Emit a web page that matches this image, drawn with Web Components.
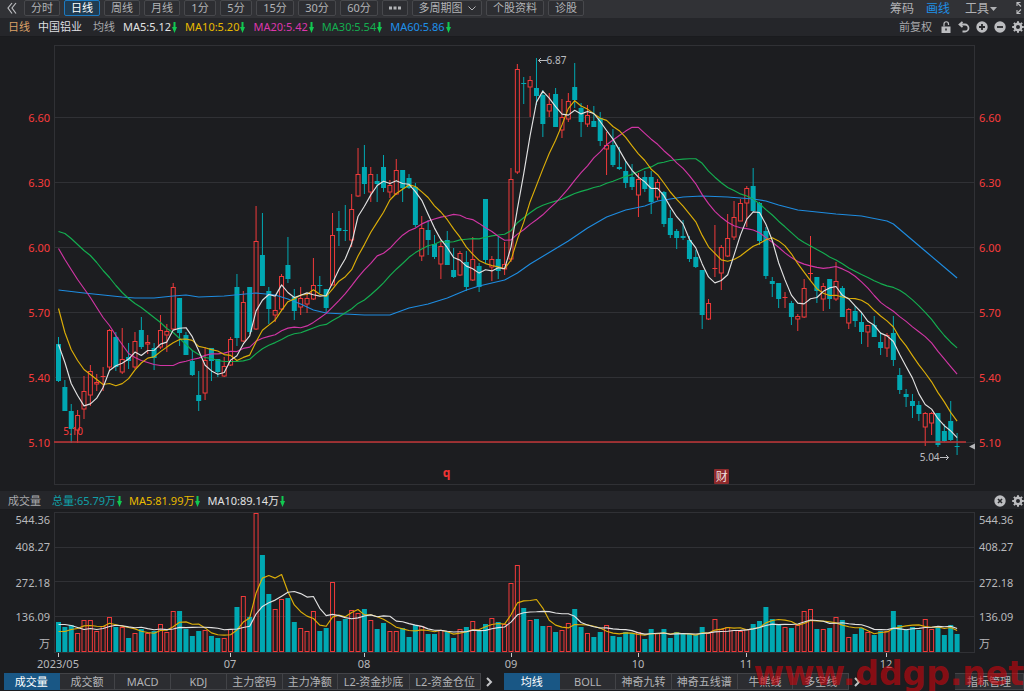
<!DOCTYPE html>
<html lang="zh-CN">
<head>
<meta charset="utf-8">
<title>中国铝业 日线</title>
<style>
html, body { margin: 0; height: 100%; background: #1c1d20; }
body { font: 11px/16px "Noto Sans", "Noto Sans CJK SC", sans-serif; color: #bcbdc0; }
</style>
</head>
<body>
<stock-app></stock-app>
<script>
// Each candle: kind (r = rising, f = falling), high, body top, body bottom, low, volume height.
const CANDLES = `f337,344,381,382,30 f380,387,411,411,25 f404,411,429,443,27 r410,415,430,443,19 r376,391,409,419,32
r365,371,395,406,32 r374,382,384,391,21 r367,376,377,391,26 r329,330,367,371,35 f332,337,367,371,25
r328,359,372,374,25 f343,357,361,369,14 r332,341,367,369,19 f317,330,347,349,23 r335,342,344,354,19
f343,348,358,370,21 r315,330,347,349,28 r324,331,335,352,20 r283,287,329,330,41 f298,298,333,346,41
f332,335,355,355,23 f350,361,375,376,16 f371,395,401,411,21 r347,360,393,400,22 f348,348,361,381,16
f359,359,372,377,14 r357,366,376,377,14 r337,339,365,366,23 f274,287,338,346,45 r291,302,341,342,56
f287,287,332,334,35 r206,241,329,330,139 f213,255,286,286,97 f287,291,309,324,58 r297,310,315,322,43
r274,276,309,310,53 f237,265,279,283,54 f289,297,311,320,30 r287,298,307,315,24 r293,298,304,313,21
r258,285,299,300,41 f276,285,286,293,21 f289,289,308,313,24 r213,235,285,285,70 f211,228,231,246,31
f205,230,231,241,33 r194,209,240,247,42 r148,174,196,197,39 f145,167,184,194,43 r167,174,192,202,32
f174,181,184,202,23 f155,167,188,192,29 r180,185,192,198,21 r159,170,194,195,21 f170,170,188,202,24
f174,178,188,189,15 f183,187,225,227,27 r216,228,256,261,26 f220,230,240,255,18 f235,244,257,259,18
r240,246,264,279,22 f231,240,265,265,20 f248,270,277,278,14 r251,253,275,276,23 f251,262,287,291,25
r237,259,280,281,31 f263,266,287,292,22 f199,199,260,264,28 r256,259,267,281,34 f237,259,271,279,30
r242,264,269,275,28 r168,179,259,262,69 r64,69,172,174,87 f77,83,84,104,44 r76,80,87,117,32
f58,88,96,105,33 f90,95,124,137,26 r93,104,111,117,26 f88,94,127,127,20 r99,117,130,138,22
r93,101,119,122,29 f63,87,100,108,43 f103,108,122,137,25 r105,115,124,127,19 f106,121,127,127,15
f112,118,141,146,20 r132,145,149,175,27 f129,145,165,167,16 f147,167,169,170,15 f161,171,183,188,20
f164,177,187,190,19 r173,179,195,217,20 f171,177,189,192,13 f171,177,202,214,23 r179,182,197,200,19
f191,192,224,227,23 f210,218,235,238,14 f229,231,238,249,20 f220,236,238,240,18 f236,240,259,262,18
f250,257,267,268,17 f270,270,315,329,25 r299,303,319,320,19 r225,268,269,277,33 r245,247,273,290,23
r214,238,256,257,25 r201,217,237,240,22 r199,203,221,221,21 r186,188,203,227,23 f168,186,211,212,28
f202,203,241,245,31 f227,231,276,279,45 f277,281,284,297,33 f283,283,299,308,28 r292,297,298,308,25
f301,303,317,325,24 r314,316,319,331,27 r279,288,317,318,41 r236,273,274,281,43 f277,277,291,303,23
r283,286,299,311,23 f279,279,299,309,24 r262,281,299,301,35 f286,288,317,317,32 r308,309,323,329,15
f306,311,321,327,18 f313,322,332,344,24 r325,325,332,347,20 f316,325,337,337,17 f332,342,348,355,21
r333,335,348,357,21 f316,333,360,366,41 f368,375,390,394,27 f389,394,397,407,23 f394,401,406,418,25
f401,405,414,421,22 r412,413,427,446,33 r412,413,423,435,23 f413,413,445,447,25 f424,431,441,442,17
f401,421,440,441,27 f433,446,447,455,18`.split(/\s+/).map(s => {
  const [high, top, bottom, low, vol] = s.slice(1).split(',').map(Number);
  return { up: s[0] === 'r', high, top, bottom, low, vol };
});
const START = 58.5, PITCH = 6.373;
const xAt = i => START + PITCH * i;

// Moving average: opening values come from earlier sessions, the rest is computed.
function average(values, n, seed) {
  return values.map((v, i) => {
    if (i < seed.length) return seed[i];
    const part = values.slice(Math.max(0, i - n + 1), i + 1);
    return part.reduce((a, b) => a + b, 0) / part.length;
  });
}
const polyline = (pts, color) =>
  `<polyline fill="none" stroke="${color}" stroke-width="1.15" stroke-linejoin="round" points="${pts.map(p => p[0].toFixed(1) + ',' + p[1].toFixed(1)).join(' ')}"/>`;
const series = (ys, color) => polyline(ys.map((y, i) => [xAt(i), y + .5]), color);

const RED = '#f03a3a', TEAL = '#00a8b2', GRID = '#303135';
const WHITE = '#e2e2e2', YELLOW = '#dcae08', PINK = '#d035a4', GREEN = '#14ae50', BLUE = '#1e8ce0';

function define(name, html, setup) {
  const tpl = document.createElement('template');
  tpl.innerHTML = html;
  customElements.define(name, class extends HTMLElement {
    constructor() {
      super();
      this.attachShadow({ mode: 'open' }).append(tpl.content.cloneNode(true));
    }
    connectedCallback() { if (setup) setup(this, this.shadowRoot); }
  });
}

define('tool-button', `
<style>
:host { display: block; flex: 0 0 auto; width: 36px; height: 16px; }
:host([size="s"]) { width: 32px; }
:host([size="m"]) { width: 38px; }
:host([size="xs"]) { width: 26px; }
:host([size="l"]) { width: 58px; }
:host([size="xl"]) { width: 70px; }
button { display: flex; align-items: center; justify-content: center; gap: 5px; width: 100%; height: 16px; padding: 0;
  border: 1px solid #47484c; border-radius: 2px; background: #2d2e32; color: #b2b3b6; font: inherit; line-height: 14px; white-space: nowrap; }
:host([active]) button { border-color: #1c79c0; background: #203c52; color: #fff; }
</style><button type="button"><slot></slot></button>`);

define('icon-button', `
<style>
:host { display: block; flex: 0 0 auto; }
button { display: flex; padding: 0; border: 0; background: none; color: inherit; }
svg { display: block; }
</style><button type="button"></button>`, (host, root) => {
  const gear = '<g fill="none" stroke="currentColor"><circle cx="6" cy="6" r="3.200" stroke-width="2.400"/><path d="M6 .2v2M6 9.800v2M.2 6h2M9.800 6h2M1.900 1.900l1.400 1.400M8.700 8.700l1.400 1.400M1.900 10.100l1.400-1.400M8.700 3.300l1.400-1.400" stroke-width="2"/></g>';
  const icons = {
    lock: '<path fill="currentColor" d="M1.500 5.500h9V12h-9z"/><path d="M4 5.500V3a2 2 0 014.500 0v1" fill="none" stroke="currentColor" stroke-width="1.200"/><path d="M6 7.500v2" stroke="#26272a" stroke-width="1.500"/>',
    undo: '<path d="M1.500 3.500H7a3.500 3.500 0 010 7H4.500M4.500.8L1.500 3.500l3 2.700" fill="none" stroke="currentColor" stroke-width="1.800"/>',
    plus: '<circle cx="6" cy="6" r="5.700" fill="currentColor"/><path d="M3 6h6M6 3v6" stroke="#26272a" stroke-width="1.800"/>',
    minus: '<circle cx="6" cy="6" r="5.700" fill="currentColor"/><path d="M3 6h6" stroke="#26272a" stroke-width="1.800"/>',
    close: '<circle cx="6" cy="6" r="5.700" fill="currentColor"/><path d="M4 4l4 4M8 4l-4 4" stroke="#26272a" stroke-width="1.600"/>',
    gear,
    back: '<path d="M6 1L2 6l4 5.500M10 1L6 6l4 5.500" fill="none" stroke="currentColor" stroke-width="1.200"/>',
    next: '<path d="M4 2l4 4-4 4" fill="none" stroke="currentColor" stroke-width="2"/>',
    expand: '<path d="M2 5V1.500h3.500M2 1.500L6 5.500M2 9v3.500h3.500M2 12.500L6 8.500" fill="none" stroke="currentColor" stroke-width="1.100"/>'
  };
  const kind = host.getAttribute('kind'), h = kind === 'expand' ? 14 : 12;
  const button = root.querySelector('button');
  button.setAttribute('aria-label', host.getAttribute('label'));
  button.innerHTML = `<svg width="12" height="${h}" viewBox="0 0 12 ${h}">${icons[kind]}</svg>`;
});

define('top-toolbar', `
<style>
:host { display: flex; align-items: flex-start; gap: 4px; height: 18px; padding-left: 6px; background: #313236; overflow: hidden; }
.back { width: 14px; padding-top: 2px; }
.space { flex: 1; }
.links { display: flex; gap: 12px; font-size: 12px; line-height: 17px; }
a { color: #b0b1b4; text-decoration: none; display: flex; align-items: center; gap: 1px; }
a.on { color: #1e90e6; margin-right: 3px; }
.expand { padding: 1px 0 0 14px; margin-right: -3px; }
svg { display: block; }
</style>
<icon-button class="back" kind="back" label="后退"></icon-button>
<tool-button>分时</tool-button><tool-button active>日线</tool-button><tool-button>周线</tool-button><tool-button>月线</tool-button>
<tool-button size="s">1分</tool-button><tool-button size="s">5分</tool-button><tool-button size="m">15分</tool-button><tool-button size="m">30分</tool-button><tool-button size="m">60分</tool-button>
<tool-button size="xs"><svg width="12" height="4" viewBox="0 0 12 4" fill="currentColor"><path d="M0 .5h3v3H0zM4.500.5h3v3h-3zM9 .5h3v3H9z"/></svg></tool-button>
<tool-button size="xl">多周期图<svg width="8" height="5" viewBox="0 0 8 5"><path d="M.5.5L4 4 7.500.5" fill="none" stroke="currentColor"/></svg></tool-button>
<tool-button size="l">个股资料</tool-button><tool-button>诊股</tool-button>
<span class="space"></span>
<nav class="links"><a href="#chips">筹码</a><a class="on" href="#draw">画线</a><a href="#tools">工具<svg width="7" height="4" viewBox="0 0 7 4"><path d="M0 0h7L3.500 4z" fill="currentColor"/></svg></a></nav>
<icon-button class="expand" kind="expand" label="全屏"></icon-button>`);

define('ma-value', `
<style>
:host { display: flex; align-items: center; white-space: nowrap; }
svg { display: block; margin-left: 1px; }
</style><slot></slot><svg width="5" height="11" viewBox="0 0 5 11"><path d="M1.500 0h2v5H5L2.500 11 0 5h1.500z" fill="#12c850"/></svg>`);

define('info-bar', `
<style>
:host { display: flex; align-items: center; gap: 8px; padding: 0 0 0 8px; background: #25262a; border-bottom: 1px solid #1a1b1e; box-sizing: border-box; height: 19px; overflow: hidden; }
::slotted(.space) { flex: 1; }
</style><slot></slot>`);

define('price-axis', `
<style>
:host { display: grid; grid-template-rows: 48fr repeat(6, 65fr) 16fr; color: #f83c3c; }
:host([side="left"]) { text-align: right; padding-right: 4px; }
:host([side="right"]) { padding-left: 4px; }
span { align-self: center; }
</style><i></i><span>6.60</span><span>6.30</span><span>6.00</span><span>5.70</span><span>5.40</span><span>5.10</span>`);

define('volume-axis', `
<style>
:host { display: grid; grid-template-rows: 19px 36px 35px 34px 19px; color: #b8b9bc; }
:host([side="left"]) { text-align: right; padding-right: 4px; }
:host([side="right"]) { padding-left: 4px; }
span { align-self: center; }
</style><span>544.36</span><span>408.27</span><span>272.18</span><span>136.09</span><span>万</span>`);

define('price-plot', `
<style>
:host { display: block; position: relative; min-height: 0; min-width: 0; }
svg { position: absolute; inset: 0; width: 100%; height: 100%; }
.note { position: absolute; font-size: 10px; line-height: 12px; white-space: nowrap; }
.note svg { position: static; display: inline-block; width: 9px; height: 7px; }
.q { font-weight: 700; font-size: 12px; color: #f03434; }
.badge { width: 15px; height: 15px; line-height: 15px; font-size: 12px; text-align: center; background: #8e2a2c; color: #f0dcdc; border-radius: 1px; }
</style>
<svg class="plot" viewBox="54 37 921 454" preserveAspectRatio="none" aria-hidden="true"></svg>
<span class="note" style="left:52.500%;top:3.700%"><svg viewBox="0 0 9 7"><path d="M9 3.500H.5M3 1L.5 3.500 3 6" fill="none" stroke="currentColor"/></svg>6.87</span>
<span class="note" style="left:94%;top:91.200%">5.04<svg viewBox="0 0 9 7"><path d="M0 3.500h8.500M6 1l2.500 2.500L6 6" fill="none" stroke="currentColor"/></svg></span>
<span class="note" style="left:1%;top:85.500%;color:#f83c3c">5.10</span>
<span class="note q" style="left:42.200%;top:94.800%">q</span>
<span class="note badge" style="left:71.700%;top:95.200%">财</span>`, (host, root) => {
  let out = `<path d="M54 45.500H975.500M54 484.500H975.500M54.500 45V485M974.500 45V485" stroke="${GRID}" fill="none"/>`;
  for (const y of [117.5, 182.5, 247.5, 312.5, 377.5, 442.5]) out += `<path d="M54 ${y}H975" stroke="${GRID}"/>`;
  CANDLES.forEach((c, i) => {
    const x = xAt(i), body = Math.max(1, c.bottom - c.top);
    if (c.up) {
      out += `<path d="M${x} ${c.high}V${c.top}M${x} ${c.bottom}V${c.low}" stroke="${RED}"/>`;
      out += body < 2 ? `<path d="M${x - 2.5} ${c.top + .5}h5" stroke="${RED}"/>`
        : `<rect x="${x - 2}" y="${c.top + .5}" width="4" height="${body - .5}" fill="none" stroke="${RED}"/>`;
    } else {
      out += `<path d="M${x} ${c.high}V${Math.max(c.low, c.bottom)}" stroke="${TEAL}"/><rect x="${x - 2.5}" y="${c.top}" width="5" height="${body}" fill="${TEAL}"/>`;
    }
  });
  const close = CANDLES.map(c => c.up ? c.top : c.bottom);
  const ma60 = [0,290, 4,293, 7,295, 10,297, 12,298, 15,298, 18,296, 20,295, 22,297, 26,296, 31,293, 34,295, 36,299, 38,304, 40,310, 42,313, 45,314, 48,315, 52,315, 55,308, 58,304, 61,298, 64,290, 66,286, 70,280, 72,273, 74,264, 80,241, 83,228, 86,217, 89,210, 92,206, 94,201, 96,199, 98,197, 101,196, 105,197, 109,199, 111,201, 113,205, 116,210, 119,212, 122,214, 126,216, 130,221, 131,224, 136,251, 141,278];
  const pts = [];
  for (let k = 0; k < ma60.length; k += 2) pts.push([xAt(ma60[k]), ma60[k + 1]]);
  out += polyline(pts, BLUE);
  out += series(average(close, 30, [231,233,238,244,250,255,262,270,277,285,292,298,303,307,312,317,322,328,332,338,344,350,354,357,358,360,361,361,361]), GREEN);
  out += series(average(close, 20, [248,259,269,279,288,297,307,317,325,335,344,353,357,360,362,364,365,365,365]), PINK);
  out += series(average(close, 10, [308,332,349,360,369,374,379,384,383]), YELLOW);
  out += series(average(close, 5, [344,362,383,395]), WHITE);
  out += '<path d="M54 442H966" stroke="#c03436" stroke-width="1.500"/><path d="M975 443.500v6l-6-3z" fill="#b4b5b8"/>';
  root.querySelector('.plot').innerHTML = out;
});

define('volume-plot', `
<style>
:host { display: block; position: relative; min-width: 0; }
svg { position: absolute; inset: 0; width: 100%; height: 100%; }
</style><svg viewBox="54 510 921 143" preserveAspectRatio="none" aria-hidden="true"></svg>`, (host, root) => {
  let out = `<path d="M54 512.500H975M54 547.500H975M54 581.500H975M54 616.500H975M54 652.500H975M54.500 512V653M974.500 512V653" stroke="${GRID}" fill="none"/>`;
  CANDLES.forEach((c, i) => {
    const x = xAt(i), y = 652 - c.vol;
    out += c.up ? `<rect x="${x - 2}" y="${y + .5}" width="4" height="${c.vol - 1}" fill="none" stroke="${RED}"/>`
      : `<rect x="${x - 2.5}" y="${y}" width="5" height="${c.vol}" fill="${TEAL}"/>`;
  });
  const v = CANDLES.map(c => c.vol), flip = a => a.map(h => 652 - h);
  out += series(flip(average(v, 5, [21, 21, 23, 24])), YELLOW);
  out += series(flip(average(v, 10, [28, 28, 27, 25, 23, 24, 23, 24, 26])), WHITE);
  root.querySelector('svg').innerHTML = out;
});

define('date-axis', `
<style>
:host { display: grid; grid-template-columns: 58fr 172fr 134fr 147fr 127fr 108fr 140fr 138fr; height: 19px; color: #b8b9bc; }
span { display: flex; flex-direction: column; align-items: flex-start; }
span i { width: 1px; height: 4px; background: #c8c9cb; }
span b { font-weight: 400; line-height: 13px; width: 44px; margin-left: -22px; text-align: center; }
</style><div></div><span><i></i><b>2023/05</b></span><span><i></i><b>07</b></span><span><i></i><b>08</b></span><span><i></i><b>09</b></span><span><i></i><b>10</b></span><span><i></i><b>11</b></span><span><i></i><b>12</b></span>`);

define('tab-item', `
<style>
:host { display: block; flex: 56 1 0; min-width: 0; }
:host([size="l"]) { flex-grow: 72; }
:host([size="m"]) { flex-grow: 66; }
button { display: block; width: 100%; height: 17px; padding: 0; border: 1px solid #424347; border-left-width: 0; background: #2c2d31; color: #b2b3b6; font: inherit; line-height: 15px; white-space: nowrap; }
:host([active]) button { background: #195785; border-color: #195785; color: #fff; }
</style><button type="button"><slot></slot></button>`);

define('bottom-tabs', `
<style>
:host { display: flex; align-items: flex-start; padding: 1px 0 0 4px; height: 18px; background: #1c1d20; }
.first { display: flex; flex: 478 1 0; }
.second { display: flex; flex: 345 1 0; }
icon-button { padding: 3px 8px 0 2px; color: #c4c5c8; }
.gap { padding-right: 9px; }
.manage { flex: 69 1 0; margin-left: 84px; }
</style>
<div class="first"><tab-item active>成交量</tab-item><tab-item>成交额</tab-item><tab-item>MACD</tab-item><tab-item>KDJ</tab-item><tab-item>主力密码</tab-item><tab-item>主力净额</tab-item><tab-item size="l">L2-资金抄底</tab-item><tab-item size="l">L2-资金仓位</tab-item></div>
<icon-button class="gap" kind="next" label="更多副图指标"></icon-button>
<div class="second"><tab-item active>均线</tab-item><tab-item>BOLL</tab-item><tab-item>神奇九转</tab-item><tab-item size="m">神奇五线谱</tab-item><tab-item>牛熊线</tab-item><tab-item>多空线</tab-item></div>
<icon-button kind="next" label="更多主图指标"></icon-button>
<tab-item class="manage">指标管理</tab-item>`);

define('stock-app', `
<style>
:host { display: grid; position: relative; grid-template-rows: 18px 19px minmax(240px, 1fr) 19px 143px 19px 19px; min-height: 100vh; box-sizing: border-box; overflow: hidden; }
.row { display: grid; grid-template-columns: 54px minmax(0, 1fr) 49px; min-height: 0; }
.day { color: #dca268; }
.name { color: #dedfe1; }
.ma5 { color: #e2e2e2; } .ma10 { color: #e8ba00; } .ma20 { color: #dc36ac; } .ma30 { color: #14ae50; } .ma60 { color: #1e90ea; }
.total { color: #10a0a8; }
.muted { color: #a8a9ac; }
.name { margin-right: 3px; }
.lead { margin-right: 4px; }
.icons { display: flex; align-items: center; gap: 6px; color: #bcbdc0; }
.volume { gap: 7px; padding-top: 2px; }
.mark { position: absolute; right: 0; bottom: -2px; font: 700 33px/38px "DejaVu Sans", sans-serif; color: rgba(205, 5, 12, .62); pointer-events: none; white-space: nowrap; }
</style>
<top-toolbar></top-toolbar>
<info-bar><span class="day">日线</span><span class="name">中国铝业</span><span class="muted">均线</span>
<ma-value class="ma5">MA5:5.12</ma-value><ma-value class="ma10">MA10:5.20</ma-value><ma-value class="ma20">MA20:5.42</ma-value><ma-value class="ma30">MA30:5.54</ma-value><ma-value class="ma60">MA60:5.86</ma-value>
<span class="space"></span><span class="muted">前复权</span>
<div class="icons"><icon-button kind="lock" label="锁定"></icon-button><icon-button kind="undo" label="撤销"></icon-button><icon-button kind="plus" label="放大"></icon-button><icon-button kind="minus" label="缩小"></icon-button><icon-button kind="gear" label="设置"></icon-button></div></info-bar>
<div class="row"><price-axis side="left"></price-axis><price-plot></price-plot><price-axis side="right"></price-axis></div>
<info-bar class="volume"><span class="muted lead">成交量</span><ma-value class="total">总量:65.79万</ma-value><ma-value class="ma10">MA5:81.99万</ma-value><ma-value class="ma5">MA10:89.14万</ma-value>
<span class="space"></span><div class="icons"><icon-button kind="close" label="关闭"></icon-button><icon-button kind="gear" label="设置"></icon-button></div></info-bar>
<div class="row"><volume-axis side="left"></volume-axis><volume-plot></volume-plot><volume-axis side="right"></volume-axis></div>
<date-axis></date-axis>
<bottom-tabs></bottom-tabs>
<span class="mark">www.ddgp.net</span>`);
</script>
</body>
</html>
